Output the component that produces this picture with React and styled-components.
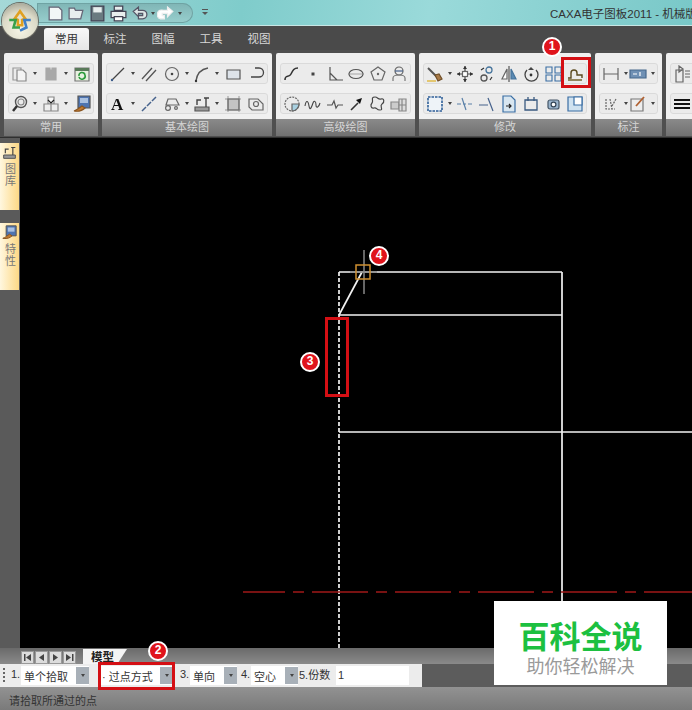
import React from 'react';
import styled, { createGlobalStyle } from 'styled-components';

const GlobalStyle = createGlobalStyle`
  html, body {
    margin: 0;
    padding: 0;
    width: 692px;
    height: 710px;
    overflow: hidden;
    background: #5a5a5a;
  }
  body {
    font-family: "Liberation Sans", "Noto Sans CJK SC", sans-serif;
  }
`;

const Window = styled.div`
  position: relative;
  width: 692px;
  height: 710px;
  overflow: hidden;
  display: flex;
  flex-direction: column;
`;

const TitleBar = styled.header`
  height: 26px;
  flex: none;
  display: flex;
  align-items: center;
  padding-left: 37px;
  background: linear-gradient(100deg, #a5d8d8 0%, #7fcccb 35%, #9adada 62%, #79c8c8 100%);
  border-bottom: 1px solid #c8e6e4;
  box-sizing: border-box;
`;

const QuickAccess = styled.div`
  width: 156px;
  height: 20px;
  margin-top: 1px;
  padding-left: 9px;
  box-sizing: border-box;
  display: flex;
  align-items: center;
  gap: 2px;
  border-radius: 0 11px 11px 0;
  background: linear-gradient(#7fb5b5, #98cfce);
  box-shadow: inset 0 0 0 1px #6fa3a3;
`;

const QuickCustomize = styled.span`
  margin-left: 9px;
  width: 6px;
  height: 6px;
  border-top: 1px solid #555;
  position: relative;
  &::after {
    content: '';
    position: absolute;
    top: 2px;
    left: 0;
    border: 3px solid transparent;
    border-top-color: #555;
  }
`;

const Title = styled.div`
  margin-left: auto;
  width: 142px;
  overflow: hidden;
  white-space: nowrap;
  font-size: 11.5px;
  color: #333;
`;

const AppButton = styled.div`
  position: absolute;
  left: 2px;
  top: 3px;
  width: 36px;
  height: 36px;
  border-radius: 50%;
  background: radial-gradient(circle at 50% 75%, #f6f4e4 0%, #dcdac8 55%, #8d8d80 100%);
  box-shadow: 0 0 0 1px #6a6a62;
  display: flex;
  align-items: center;
  justify-content: center;
  filter: blur(0.3px);
`;

const TabBar = styled.nav`
  height: 24px;
  flex: none;
  display: flex;
  align-items: flex-end;
  padding-left: 44px;
  background: #4a4a4a;
  box-sizing: border-box;
`;

const Tab = styled.div`
  width: ${(p) => (p.$active ? '45px' : '48px')};
  margin-right: ${(p) => (p.$active ? '2px' : '0')};
  height: 22px;
  line-height: 22px;
  text-align: center;
  font-size: 11.5px;
  color: ${(p) => (p.$active ? '#333' : '#d8d8d8')};
  background: ${(p) => (p.$active ? 'linear-gradient(#f8f8f8, #e6e6e6)' : 'transparent')};
  border-radius: 3px 3px 0 0;
`;

const Ribbon = styled.section`
  height: 88px;
  flex: none;
  display: flex;
  gap: 4px;
  padding: 3px 0 1px 4px;
  box-sizing: border-box;
  background: #4f4f4f;
  border-bottom: 1px solid #2f2f2f;
`;

const Group = styled.div`
  width: ${(p) => p.$width}px;
  flex: none;
  display: flex;
  flex-direction: column;
  background: #f0f0f0;
  border-radius: 2px 2px 0 0;
`;

const Rows = styled.div`
  flex: 1;
  padding: 10px 4px 0;
  display: flex;
  flex-direction: column;
  gap: 9px;
  filter: blur(0.35px);
`;

const Row = styled.div`
  height: 19px;
  display: flex;
  align-items: center;
  justify-content: space-between;
  padding: 0 2px;
  background: #ebebeb;
  border: 1px solid #dadada;
  border-radius: 3px;
`;

const Tool = styled.span`
  display: inline-flex;
  align-items: center;
  gap: 4px;
  flex: none;
`;

const Caret = styled.span`
  width: 0;
  height: 0;
  border: 2.5px solid transparent;
  border-top: 3px solid #444;
  border-bottom: 0;
`;

const GroupLabel = styled.div`
  height: 17px;
  line-height: 17px;
  text-align: center;
  font-size: 11px;
  color: #d6d6d6;
  background: linear-gradient(#8a8a8a, #707070);
  white-space: nowrap;
`;

const Middle = styled.main`
  flex: 1;
  min-height: 0;
  display: flex;
`;

const Dock = styled.aside`
  width: 20px;
  flex: none;
  background: #5a5a5a;
  padding-top: 5px;
  display: flex;
  flex-direction: column;
  gap: 13px;
  box-sizing: border-box;
`;

const DockTab = styled.div`
  height: 67px;
  width: 19px;
  background: linear-gradient(90deg, #fff7df, #fdd885);
  display: flex;
  flex-direction: column;
  align-items: center;
  padding-top: 2px;
  box-sizing: border-box;
  gap: 3px;
`;

const DockText = styled.span`
  writing-mode: vertical-rl;
  font-size: 11px;
  letter-spacing: 1px;
  color: #777;
`;

const Canvas = styled.div`
  flex: 1;
  background: #000;
  position: relative;
`;

const Drawing = styled.svg`
  display: block;
  width: 100%;
  height: 100%;
`;

const SheetBar = styled.div`
  height: 16px;
  flex: none;
  display: flex;
  align-items: flex-end;
  padding-left: 21px;
  gap: 1px;
  background: linear-gradient(#6a6a6a, #8a8a8a);
`;

const NavButton = styled.span`
  width: 13px;
  height: 13px;
  background: #dcdcdc;
  border: 1px solid #999;
  box-sizing: border-box;
  display: flex;
  align-items: center;
  justify-content: center;
`;

const SheetTab = styled.div`
  width: 44px;
  height: 15px;
  margin-left: 6px;
  padding-left: 8px;
  box-sizing: border-box;
  line-height: 16px;
  font-size: 11.5px;
  font-weight: 700;
  color: #222;
  background: #f4f4f4;
  clip-path: polygon(0 0, 100% 0, 78% 100%, 0 100%);
`;

const OptionBar = styled.div`
  height: 23px;
  flex: none;
  display: flex;
  background: #5c5c5c;
`;

const Options = styled.div`
  width: 422px;
  flex: none;
  padding-left: 3px;
  box-sizing: border-box;
  display: flex;
  align-items: center;
  background: #ececec;
  font-size: 11px;
  color: #333;
`;

const Grip = styled.span`
  width: 2px;
  height: 15px;
  margin-right: 6px;
  background: repeating-linear-gradient(#666 0 2px, transparent 2px 4px);
`;

const Ordinal = styled.span`
  flex: none;
  width: ${(p) => p.$width || 10}px;
  margin-top: -3px;
  white-space: nowrap;
`;

const Combo = styled.div`
  width: ${(p) => p.$width}px;
  margin-right: ${(p) => p.$gap}px;
  height: 19px;
  padding-left: 3px;
  box-sizing: border-box;
  flex: none;
  display: flex;
  align-items: center;
  justify-content: space-between;
  background: #fff;
`;

const ComboArrow = styled.span`
  width: 13px;
  height: 17px;
  background: #a8b0b8;
  display: flex;
  align-items: center;
  justify-content: center;
`;

const NumberField = styled.div`
  width: 73px;
  height: 19px;
  margin-left: 5px;
  padding-left: 2px;
  line-height: 18px;
  background: #fff;
  box-sizing: border-box;
`;

const StatusBar = styled.footer`
  height: 23px;
  flex: none;
  padding: 5px 0 0 9px;
  box-sizing: border-box;
  font-size: 11px;
  color: #333;
  background: linear-gradient(#929292, #7a7a7a);
`;

const Marker = styled.div`
  position: absolute;
  left: ${(p) => p.$x}px;
  top: ${(p) => p.$y}px;
  width: ${(p) => p.$w}px;
  height: ${(p) => p.$h}px;
  border: 3.5px solid #d40f14;
  box-sizing: border-box;
`;

const Badge = styled.div`
  position: absolute;
  left: ${(p) => p.$x - 10}px;
  top: ${(p) => p.$y - 10}px;
  width: 20px;
  height: 20px;
  border-radius: 50%;
  background: #e0141c;
  border: 2.5px solid #fff;
  box-sizing: border-box;
  color: #fff;
  font-size: 12px;
  font-weight: 700;
  line-height: 15px;
  text-align: center;
`;

const Watermark = styled.div`
  position: absolute;
  left: 494px;
  top: 601px;
  width: 173px;
  height: 84px;
  background: #fff;
  display: flex;
  flex-direction: column;
  align-items: center;
  padding-top: 16px;
  box-sizing: border-box;
`;

const WatermarkTitle = styled.div`
  font-family: "Noto Sans CJK SC", sans-serif;
  font-size: 31px;
  line-height: 36px;
  font-weight: 700;
  color: #1cc040;
`;

const WatermarkText = styled.div`
  font-family: "Noto Sans CJK SC", sans-serif;
  font-size: 18px;
  line-height: 24px;
  color: #9a9a9a;
`;

const Icon = ({ size = 18, children, stroke = '#555' }) => (
  <svg width={size} height={size} viewBox="0 0 18 18" fill="none" stroke={stroke} strokeWidth="1.2">
    {children}
  </svg>
);

const icons = {
  paste: <><path d="M2 3h8v12H2z" stroke="#999" /><path d="M6 5h6l3 3v8H6z" fill="#f4f4f4" stroke="#888" /></>,
  block: <path d="M4 3h4v2h2V3h4v12H4z" fill="#a8a8a8" stroke="#a8a8a8" />,
  refresh: <><path d="M2 3h14v13H2z" fill="#e8f0e0" stroke="#777" /><path d="M2 3h14v3H2z" fill="#5a7a5a" stroke="none" /><path d="M6 11a3 3 0 0 1 6-1M12 10a3 3 0 0 1-6 2" stroke="#2c9a3c" strokeWidth="1.6" /></>,
  zoom: <><circle cx="10" cy="7" r="5.5" stroke="#555" strokeWidth="1.4" /><circle cx="10" cy="7" r="3" stroke="#888" /><path d="M6 11l-4 5" stroke="#333" strokeWidth="2.4" /></>,
  docArrow: <><path d="M6 2h6v7H6z" fill="#f8f8f8" stroke="#888" /><path d="M2 9h7v7H2zM9 9h7v7H9z" fill="#eee" stroke="#888" /><path d="M6 5l3 3 3-3" stroke="#222" /></>,
  brush: <><path d="M5 1h12v12H5z" fill="#4e74b0" stroke="#555" /><path d="M7 3h8v5H7z" fill="#a9c0e0" stroke="none" /><path d="M1 16c3-1 5-3 8-5l3 2c-2 2-5 4-11 3z" fill="#c07a30" stroke="#8a5520" /></>,
  line: <><path d="M3 15L15 3" stroke="#444" strokeWidth="1.3" /><circle cx="3" cy="15" r="1.2" fill="#3a5a8a" stroke="none" /></>,
  parallel: <path d="M2 14L12 3M6 16L16 5" stroke="#555" strokeWidth="1.3" />,
  circle: <><circle cx="9" cy="9" r="6.5" stroke="#666" /><circle cx="9" cy="9" r="1.3" fill="#444" stroke="none" /></>,
  arc: <><path d="M3 16C4 8 9 4 15 3" stroke="#555" strokeWidth="1.4" /><circle cx="3" cy="16" r="1.2" fill="#333" stroke="none" /></>,
  rect: <path d="M3 5h13v9H3z" fill="#dde3ea" stroke="#555" />,
  polyline: <path d="M8 3h4a4 4 0 0 1 0 9H4" stroke="#444" strokeWidth="1.3" />,
  text: <text x="2" y="15" fontFamily="Liberation Serif" fontSize="17" fontWeight="700" fill="#111" stroke="none">A</text>,
  dashLine: <path d="M2 16l4-4M7 11l4-4M12 6l4-4" stroke="#46628c" strokeWidth="1.5" />,
  slot: <><path d="M5 4h8l3 6H3z" stroke="#666" /><circle cx="5" cy="13" r="2.4" stroke="#666" /><circle cx="13" cy="13" r="1.4" stroke="#666" /></>,
  stamp: <><path d="M2 12h14v4H2z" fill="#999" stroke="#555" /><path d="M11 3h5M13 3v9M4 10V5h4" stroke="#444" strokeWidth="1.4" /></>,
  hatch: <><path d="M4 4h11v11H4z" fill="#c4c4c4" stroke="#666" /><path d="M1 4h16M1 15h16M4 1v16M15 1v16" stroke="#777" strokeWidth=".7" /></>,
  polygon: <><path d="M2 4h9l5 5v6H5l-3-3z" stroke="#666" /><circle cx="9" cy="9" r="2.5" stroke="#666" /></>,
  spline: <path d="M2 15c0-6 4-2 6-6s3-6 7-6" stroke="#333" strokeWidth="1.6" />,
  point: <rect x="7.5" y="7.5" width="3" height="3" fill="#444" stroke="none" />,
  angle: <path d="M4 2v13h13M4 8l7 7" stroke="#555" strokeWidth="1.2" />,
  ellipse: <><ellipse cx="9" cy="9" rx="7" ry="4.5" stroke="#555" /><path d="M1 9h16" stroke="#888" strokeWidth=".7" /></>,
  pentagon: <><path d="M9 2l7 5-3 8H5L2 7z" stroke="#666" /><circle cx="9" cy="9" r="1.2" fill="#666" stroke="none" /></>,
  person: <><circle cx="9" cy="6" r="4" stroke="#666" /><path d="M3 16v-3a6 3 0 0 1 12 0v3" stroke="#777" /><path d="M5 6h8" stroke="#46628c" /></>,
  pie: <><circle cx="9" cy="9" r="7" stroke="#666" strokeDasharray="2 1" /><path d="M9 9h7a7 7 0 0 1-7 7z" fill="#a8d0e0" stroke="#666" /></>,
  wave: <path d="M1 11c1-6 3-6 4 0s3 0 4-3 3-2 3 2 3 2 4-2" stroke="#444" strokeWidth="1.1" />,
  breakLine: <path d="M1 10h5l2-4 2 7 2-3h5" stroke="#555" />,
  arrow: <><path d="M4 15L11 8" stroke="#333" strokeWidth="1.6" /><path d="M15 3l-6 2 4 4z" fill="#111" stroke="none" /></>,
  cloud: <path d="M6 2c3 0 3 3 6 2s4 3 1 5 2 6-2 6-3-3-6-2-4-3-2-5-2-6 3-6z" stroke="#444" />,
  table: <><path d="M1 7h8v7H1z" fill="#ccc" stroke="#888" /><path d="M9 4h7v12H9zM12 4v12M9 10h7" fill="#ddd" stroke="#888" /></>,
  eraser: <><path d="M2 3l9 9" stroke="#555" strokeWidth="2" /><path d="M9 10l4-1 3 5-4 2z" fill="#a87a48" stroke="#704f28" /><path d="M1 16h9" stroke="#e0b020" /></>,
  move: <><path d="M9 1v16M1 9h16" stroke="#444" /><path d="M9 1l-2 3h4zM9 17l-2-3h4zM1 9l3-2v4zM17 9l-3-2v4z" fill="#333" stroke="none" /><rect x="6.500" y="6.500" width="5" height="5" fill="#fff" stroke="#666" /></>,
  copy: <><circle cx="11" cy="5" r="3" stroke="#46749c" strokeWidth="1.3" /><circle cx="6" cy="13" r="3" stroke="#555" strokeWidth="1.3" /><path d="M3 5l3-2M14 12l-2 3" stroke="#333" /></>,
  mirror: <><path d="M9 1v16" stroke="#555" /><path d="M7 4v10H2z" stroke="#666" fill="#fff" /><path d="M11 4v10h5z" fill="#5a8ab4" stroke="#46749c" /></>,
  rotate: <><path d="M14 5a6.500 6.500 0 1 1-9 0" stroke="#444" strokeWidth="1.3" /><path d="M9 2l3 3H6z" fill="#444" stroke="none" /><circle cx="9" cy="10" r="1.4" fill="#333" stroke="none" /></>,
  array: <path d="M2 2h6v6H2zM11 2h6v6h-6zM2 10h6v6H2zM11 10h6v6h-6z" stroke="#3a6ea4" strokeWidth="1.1" />,
  fillet: <><path d="M2 13h3V8a3 3 0 0 1 6 0v2h5v3" stroke="#5a4a20" strokeWidth="1.4" /><path d="M2 15h14" stroke="#6a5a20" strokeWidth="1.4" /></>,
  frame: <><path d="M2 2h14v14H2z" fill="#eef3f8" stroke="#2f5f98" strokeWidth="1.6" strokeDasharray="2.5 1" /></>,
  trim: <path d="M1 9h4M7 9h3M12 9h4M6 3l4 12" stroke="#5a80a8" />,
  extend: <path d="M1 10h9M10 3l5 13" stroke="#46628c" strokeWidth="1.2" />,
  page: <><path d="M3 1h8l4 4v12H3z" fill="#d8e6f0" stroke="#3a6ea4" /><path d="M6 11h5M9 9l2 2-2 2" stroke="#222" /></>,
  bracket: <path d="M3 5h12v10H3zM6 2v4M12 2v4" stroke="#3a5a80" strokeWidth="1.3" />,
  gears: <><rect x="4" y="5" width="11" height="9" rx="2" fill="#9ab4cc" stroke="#456" /><circle cx="9.500" cy="9.500" r="2.4" fill="#fff" stroke="#345" /></>,
  square: <><path d="M2 2h14v14H2z" fill="#cfe2f0" stroke="#3a6ea4" /><path d="M8 2h8v8H8z" fill="#fff" stroke="#3a6ea4" /></>,
  dim: <path d="M2 3v12M16 3v12M2 9h14" stroke="#666" />,
  ratio: <><path d="M1 5h16v8H1z" fill="#6f90b4" stroke="#47688c" /><path d="M4 9h4M11 7v4" stroke="#fff" /></>,
  dimTree: <><path d="M4 4v10h9M8 4l2 10M14 4l-4 7" stroke="#666" strokeDasharray="2 1" /></>,
  note: <><path d="M2 4h12v12H2z" fill="#eee" stroke="#777" /><path d="M7 11l8-9" stroke="#b06030" strokeWidth="1.8" /></>,
  layers: <><path d="M3 5h7v12H3z" stroke="#666" /><path d="M6 1l4 3-4 3zM12 6h5M12 9h5M12 12h5" stroke="#666" /></>,
  bars: <path d="M1 5h16M1 9h16M1 13h16" stroke="#111" strokeWidth="2" />,
};

const groups = [
  { label: '常用', width: 94, rows: [['paste*', 'block*', 'refresh'], ['zoom*', 'docArrow*', 'brush']] },
  { label: '基本绘图', width: 170, rows: [['line*', 'parallel', 'circle*', 'arc*', 'rect', 'polyline'], ['text*', 'dashLine', 'slot*', 'stamp*', 'hatch', 'polygon']] },
  { label: '高级绘图', width: 139, rows: [['spline', 'point', 'angle', 'ellipse', 'pentagon', 'person'], ['pie', 'wave', 'breakLine', 'arrow', 'cloud', 'table']] },
  { label: '修改', width: 172, rows: [['eraser*', 'move', 'copy', 'mirror', 'rotate', 'array', 'fillet'], ['frame*', 'trim', 'extend', 'page', 'bracket', 'gears', 'square']] },
  { label: '标注', width: 67, rows: [['dim*', 'ratio*'], ['dimTree*', 'note*']] },
  { label: '', width: 60, rows: [['layers'], ['bars']] },
];

const RibbonTool = ({ spec }) => {
  const name = spec.replace('*', '');
  return (
    <Tool>
      <Icon>{icons[name]}</Icon>
      {spec.endsWith('*') && <Caret />}
    </Tool>
  );
};

const Nav = ({ d }) => (
  <NavButton>
    <svg width="9" height="9" viewBox="0 0 9 9"><path d={d} fill="#444" /></svg>
  </NavButton>
);

export default function App() {
  return (
    <Window>
      <GlobalStyle />
      <TitleBar>
        <QuickAccess>
          <Icon size={19}><path d="M3 3h9l3 3v9H3z" fill="#f2f6f6" stroke="#667" /></Icon>
          <Icon size={19}><path d="M2 14V4h5l1 2h7l-2 8z" fill="#e8eeee" stroke="#667" /></Icon>
          <Icon size={19}><path d="M3 2h12v14H3z" fill="#6a7a80" stroke="#445" /><path d="M5 3h8v5H5z" fill="#e8eeee" stroke="none" /></Icon>
          <Icon size={19}><path d="M5 2h8v4H5zM2 7h14v6H2z" fill="#e8eeee" stroke="#445" /><path d="M5 12h8v4H5z" fill="#fff" stroke="#445" /></Icon>
          <Icon size={19}><path d="M3 7l5-4v3h4a4 4 0 0 1 0 8H8v-3h4V9H8v3z" fill="#dfe7e7" stroke="#556" /></Icon>
          <Caret />
          <Icon size={19}><path d="M15 7l-5-4v3H6a4 4 0 0 0-3 8h4v-3H5V9h5v3z" fill="#fff" stroke="#eee" /></Icon>
          <Caret />
        </QuickAccess>
        <QuickCustomize />
        <Title>CAXA电子图板2011 - 机械版</Title>
      </TitleBar>
      <AppButton>
        <svg width="28" height="28" viewBox="0 0 26 26" fill="none" strokeWidth="2.4">
          <path d="M8 11l5-7 5 7-3 1v5h-4v-5z" stroke="#e0a020" />
          <path d="M3 12h6l-2 7h6" stroke="#3aa04a" />
          <path d="M23 12h-6l2 7-6 3" stroke="#3f7fc8" />
        </svg>
      </AppButton>
      <TabBar>
        <Tab $active>常用</Tab>
        <Tab>标注</Tab>
        <Tab>图幅</Tab>
        <Tab>工具</Tab>
        <Tab>视图</Tab>
      </TabBar>
      <Ribbon>
        {groups.map((group) => (
          <Group key={group.label || 'more'} $width={group.width}>
            <Rows>
              {group.rows.map((row) => (
                <Row key={row.join()}>
                  {row.map((spec) => <RibbonTool key={spec} spec={spec} />)}
                </Row>
              ))}
            </Rows>
            <GroupLabel>{group.label}</GroupLabel>
          </Group>
        ))}
      </Ribbon>
      <Middle>
        <Dock>
          <DockTab>
            <Icon size={15}>{icons.stamp}</Icon>
            <DockText>图库</DockText>
          </DockTab>
          <DockTab>
            <Icon size={15}>{icons.brush}</Icon>
            <DockText>特性</DockText>
          </DockTab>
        </Dock>
        <Canvas>
          <Drawing viewBox="20 138 672 510">
            <g stroke="#f2f2f2" strokeWidth="1.7" fill="none">
              <path d="M339 272H562M339 315H562M562 272V648M339 432H692" />
              <path d="M339 272V648" strokeDasharray="4 2" />
              <path d="M339 315L362 272" />
            </g>
            <path d="M243 592H692" stroke="#a01818" strokeWidth="1.5" strokeDasharray="56 8 11 8" strokeDashoffset="14" fill="none" />
            <path d="M364 250V294M350 272H377" stroke="#888" strokeWidth="1.5" />
            <rect x="356" y="265" width="14" height="14" fill="none" stroke="#d09030" strokeWidth="1.5" />
          </Drawing>
        </Canvas>
      </Middle>
      <SheetBar>
        <Nav d="M1 1h1.500v7H1zM8 1v7L3 4.500z" />
        <Nav d="M7 1v7L2 4.500z" />
        <Nav d="M2 1v7l5-3.500z" />
        <Nav d="M7 1h1.500v7H7zM1 1v7l5-3.500z" />
        <SheetTab>模型</SheetTab>
      </SheetBar>
      <OptionBar>
        <Options>
          <Grip />
          <Ordinal>1.</Ordinal>
          <Combo $width={68} $gap={10}>单个拾取<ComboArrow><Caret /></ComboArrow></Combo>
          <Combo $width={74} $gap={7}>· 过点方式<ComboArrow><Caret /></ComboArrow></Combo>
          <Ordinal>3.</Ordinal>
          <Combo $width={47} $gap={4}>单向<ComboArrow><Caret /></ComboArrow></Combo>
          <Ordinal>4.</Ordinal>
          <Combo $width={47} $gap={1}>空心<ComboArrow><Caret /></ComboArrow></Combo>
          <Ordinal $width={32}>5.份数</Ordinal>
          <NumberField>1</NumberField>
        </Options>
      </OptionBar>
      <StatusBar>请拾取所通过的点</StatusBar>

      <Marker $x={561} $y={57} $w={30} $h={31} />
      <Marker $x={98} $y={662} $w={77} $h={28} />
      <Marker $x={325} $y={317} $w={24} $h={80} />
      <Badge $x={552} $y={47}>1</Badge>
      <Badge $x={158} $y={651}>2</Badge>
      <Badge $x={310} $y={362}>3</Badge>
      <Badge $x={379} $y={256}>4</Badge>
      <Watermark>
        <WatermarkTitle>百科全说</WatermarkTitle>
        <WatermarkText>助你轻松解决</WatermarkText>
      </Watermark>
    </Window>
  );
}
